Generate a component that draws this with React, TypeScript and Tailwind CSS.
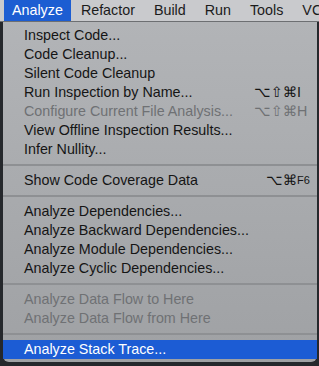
type Item =
  | { kind: "item"; label: string; mods?: string; keyName?: string; disabled?: boolean; active?: boolean }
  | { kind: "sep" };

const MENU_BAR = ["Analyze", "Refactor", "Build", "Run", "Tools", "VC"];

const ITEMS: Item[] = [
  { kind: "item", label: "Inspect Code..." },
  { kind: "item", label: "Code Cleanup..." },
  { kind: "item", label: "Silent Code Cleanup" },
  { kind: "item", label: "Run Inspection by Name...", mods: "⌥⇧⌘", keyName: "I" },
  { kind: "item", label: "Configure Current File Analysis...", mods: "⌥⇧⌘", keyName: "H", disabled: true },
  { kind: "item", label: "View Offline Inspection Results..." },
  { kind: "item", label: "Infer Nullity..." },
  { kind: "sep" },
  { kind: "item", label: "Show Code Coverage Data", mods: "⌥⌘", keyName: "F6" },
  { kind: "sep" },
  { kind: "item", label: "Analyze Dependencies..." },
  { kind: "item", label: "Analyze Backward Dependencies..." },
  { kind: "item", label: "Analyze Module Dependencies..." },
  { kind: "item", label: "Analyze Cyclic Dependencies..." },
  { kind: "sep" },
  { kind: "item", label: "Analyze Data Flow to Here", disabled: true },
  { kind: "item", label: "Analyze Data Flow from Here", disabled: true },
  { kind: "sep" },
  { kind: "item", label: "Analyze Stack Trace...", active: true },
];

export default function App() {
  return (
    <div
      className="w-[319px] h-[366px] overflow-hidden bg-[#25282c] flex flex-col text-[14.3px] leading-none"
      style={{ fontFamily: '"Liberation Sans", "DejaVu Sans", sans-serif' }}
    >
      {/* Menu bar */}
      <div className="h-[22px] shrink-0 bg-[#c9cacd] border-b border-[#6d6f72] flex items-stretch pl-[4px] whitespace-nowrap">
        {MENU_BAR.map((name, i) => (
          <div
            key={name}
            className={`flex items-center ${
              i === 0 ? "bg-[#1c5dd2] text-white px-[8px] mr-[10px]" : "text-[#1b1b1b] mr-[19px]"
            }`}
          >
            {name}
          </div>
        ))}
      </div>

      {/* Dropdown */}
      <div className="ml-[3px] w-[314px] h-[340px] rounded-b-[6px] bg-gradient-to-b from-[#b2b4b7] to-[#9fa1a4] pt-[4px] flex flex-col">
        {ITEMS.map((it, i) =>
          it.kind === "sep" ? (
            <div key={i} className="h-[12px] flex items-center">
              <div className="w-full h-[2px] bg-[#8e9093]" />
            </div>
          ) : (
            <div
              key={i}
              className={`h-[19px] shrink-0 flex items-center pl-[21px] pr-[8px] whitespace-nowrap ${
                it.active ? "bg-[#1c5cd4] text-white" : it.disabled ? "text-[#6f7174]" : "text-[#151515]"
              }`}
            >
              <span className="flex-1">{it.label}</span>
              {it.mods && (
                <span className="flex items-center">
                  <span className="text-right">{it.mods}</span>
                  <span className={`w-[12px] ${it.keyName === "F6" ? "text-[11px]" : ""}`}>{it.keyName}</span>
                </span>
              )}
            </div>
          )
        )}
      </div>
    </div>
  );
}
